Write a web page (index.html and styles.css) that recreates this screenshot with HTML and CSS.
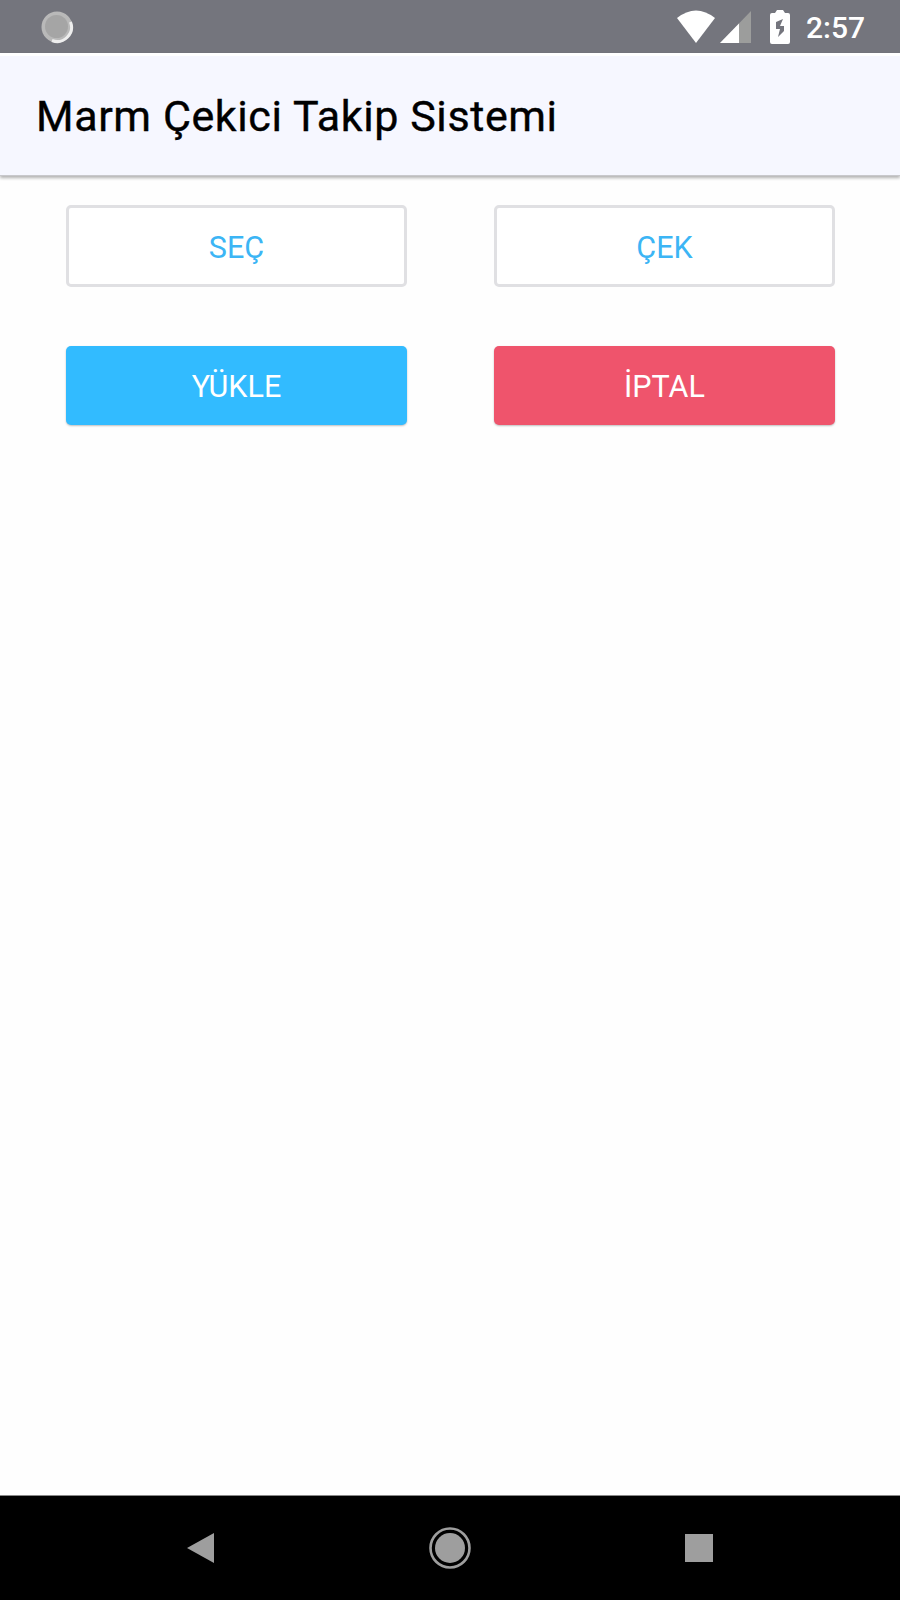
FILE: index.html
```
<!DOCTYPE html>
<html lang="tr">
<head>
    <meta charset="UTF-8">
    <title>Marm Çekici Takip Sistemi</title>
    <link rel="stylesheet" href="styles.css">
</head>
<body>
    <div class="status-bar">
        <svg class="sync-icon" width="34" height="34" viewBox="0 0 34 34">
            <circle cx="17" cy="17" r="15.5" fill="#b9b9b9"/>
            <path d="M30.5 12A14.3 14.3 0 0 1 12 30.5" fill="none" stroke="#eeeeee" stroke-width="3"/>
            <circle cx="16.5" cy="16.5" r="11.5" fill="#a5a5a5"/>
        </svg>
        <div class="status-icons">
            <svg class="wifi" width="40" height="34" viewBox="0 0 40 34">
                <path d="M1 8Q20 -7 39 8L20 33Z" fill="#fff"/>
            </svg>
            <svg class="signal" width="32" height="32" viewBox="0 0 32 32">
                <path d="M31 0V32H0Z" fill="#9c9d9c"/>
                <path d="M19 12.4V32H0Z" fill="#fff"/>
            </svg>
            <svg class="battery" width="20" height="34" viewBox="0 0 20 34">
                <path d="M7 0H13L15 3H18Q20 3 20 5V32Q20 34 18 34H2Q0 34 0 32V5Q0 3 2 3H5Z" fill="#fff"/>
                <path d="M13 9L6 12V19H10L8 27L14 21V16H10Z" fill="#74757d"/>
            </svg>
            <span class="clock">2:57</span>
        </div>
    </div>

    <header class="toolbar">
        <h1>Marm Çekici Takip Sistemi</h1>
    </header>

    <main class="content">
        <button class="btn">SEÇ</button>
        <button class="btn">ÇEK</button>
        <button class="btn btn-blue">YÜKLE</button>
        <button class="btn btn-red">İPTAL</button>
    </main>

    <nav class="nav-bar">
        <svg width="42" height="42" viewBox="0 0 42 42">
            <path d="M28 6V36L1 21Z" fill="#9e9e9e"/>
        </svg>
        <svg width="42" height="42" viewBox="0 0 42 42">
            <circle cx="21" cy="21" r="19.5" fill="none" stroke="#9e9e9e" stroke-width="2.6"/>
            <circle cx="21" cy="21" r="15" fill="#9e9e9e"/>
        </svg>
        <svg width="42" height="42" viewBox="0 0 42 42">
            <rect x="13" y="7" width="28" height="28" fill="#9e9e9e"/>
        </svg>
    </nav>
</body>
</html>
```
FILE: styles.css
```
* {
    box-sizing: border-box;
}
body {
    margin: 0;
    height: 1600px;
    display: flex;
    flex-direction: column;
    font-family: Roboto, sans-serif;
    background: #fefefe;
}
svg {
    display: block;
}
.status-bar {
    height: 53px;
    padding: 0 35px 0 40px;
    display: flex;
    justify-content: space-between;
    align-items: center;
    background: #74757d;
}
.status-icons {
    display: flex;
    align-items: center;
}
.signal {
    margin: 1px 18px 0 4px;
}
.clock {
    margin: 2px 0 0 16px;
    font-size: 30px;
    line-height: 36px;
    font-weight: 500;
    color: #fff;
}
.toolbar {
    height: 123px;
    padding: 1px 36px 0;
    display: flex;
    align-items: center;
    border-top: 3px solid #fff;
    border-bottom: 1px solid #c8c8cc;
    background: #f6f7ff;
    box-shadow: 0 2px 3px rgba(0, 0, 0, 0.3);
}
h1 {
    margin: 0;
    font-size: 43px;
    font-weight: 400;
    letter-spacing: 0.6px;
    -webkit-text-stroke: 0.4px #000;
    color: #000;
}
.content {
    flex: 1;
    padding: 29px 65px 0 66px;
    display: grid;
    grid-template-columns: 341px 341px;
    grid-auto-rows: 82px;
    justify-content: space-between;
    align-content: start;
    row-gap: 59px;
}
.btn {
    padding: 2px 0 0;
    border: 3px solid #e0e0e3;
    border-radius: 5px;
    background: #fff;
    font-family: inherit;
    font-size: 30.5px;
    color: #3cb5f5;
}
.btn-blue,
.btn-red {
    height: 79px;
    border: none;
    color: #fff;
    box-shadow: 0 1px 2px rgba(0, 0, 0, 0.25);
}
.btn-blue {
    background: #32bbff;
}
.btn-red {
    background: #ef546c;
}
.nav-bar {
    height: 105px;
    padding: 0 186px;
    display: flex;
    justify-content: space-between;
    align-items: center;
    border-top: 1px solid #888;
    background: #000;
}
```
